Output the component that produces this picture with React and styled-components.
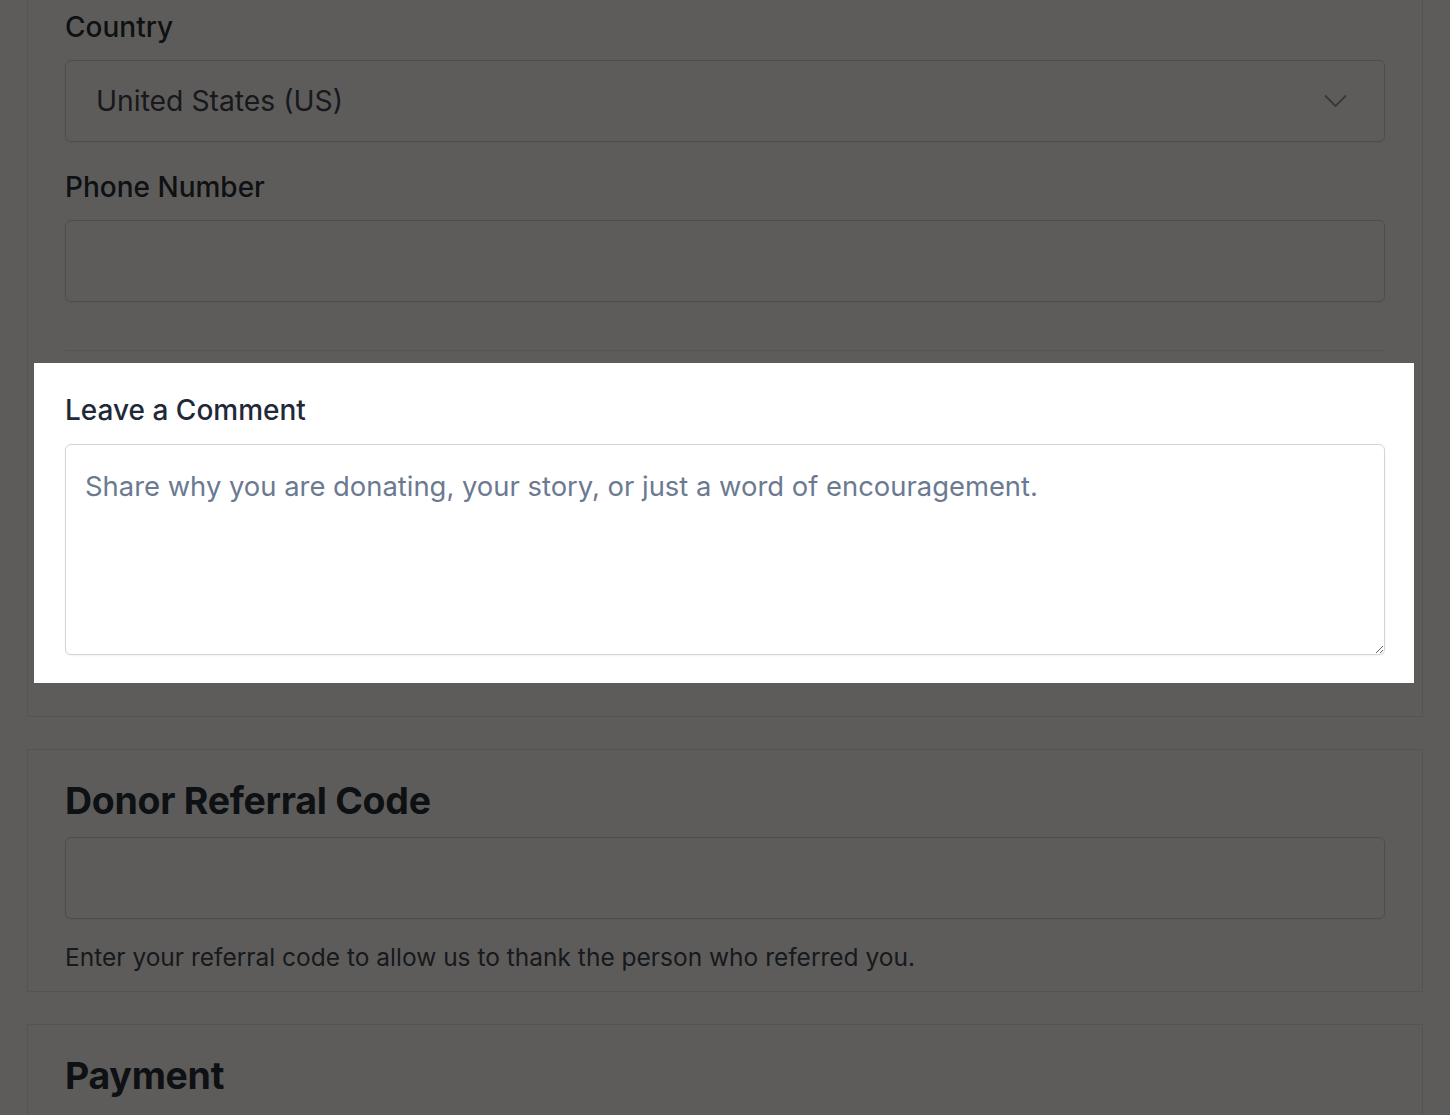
import styled, { createGlobalStyle } from "styled-components";

const GlobalStyle = createGlobalStyle`
  * { box-sizing: border-box; }
  body {
    margin: 0;
    background: #fff;
    color: #1f2937;
    font-family: Inter, "Noto Sans", sans-serif;
  }
`;

const Page = styled.main`
  display: flex;
  flex-direction: column;
  gap: 32px;
  padding: 0 27px;
  height: 1115px;
  overflow: hidden;
`;

const Card = styled.section`
  flex-shrink: 0;
  background: #fff;
  border: 1px solid #e5e7eb;
  border-top-width: ${p => (p.$cut ? 0 : 1)}px;
  padding: ${p => (p.$cut ? "8px 37px 33px" : "29px 37px 16px")};
  min-height: ${p => (p.$tall ? "200px" : "0")};
`;

const Fieldset = styled.div`
  padding-bottom: 48px;
  border-bottom: 1px solid #e5e7eb;
`;

const Field = styled.div`
  margin-bottom: 26px;
  &:last-child { margin-bottom: 0; }
`;

const Label = styled.label`
  display: block;
  font-size: 28px;
  font-weight: 500;
  line-height: 39px;
  margin-bottom: 13px;
  color: #1f2937;
`;

const Heading = styled.h2`
  margin: 0;
  font-size: 37.5px;
  font-weight: 700;
  line-height: 44px;
  letter-spacing: -0.3px;
  color: #1f2937;
`;

const Input = styled.input`
  display: block;
  width: 100%;
  height: 82px;
  margin-top: ${p => (p.$spaced ? "14px" : "0")};
  border: 1px solid #d1d5db;
  border-radius: 6px;
  box-shadow: 0 1px 2px rgba(0, 0, 0, 0.05);
  background: #fff;
  font: inherit;
  font-size: 28px;
  padding: 0 30px;
`;

const SelectWrap = styled.div`
  position: relative;
`;

const Select = styled.select`
  appearance: none;
  display: block;
  width: 100%;
  height: 82px;
  border: 1px solid #d1d5db;
  border-radius: 6px;
  box-shadow: 0 1px 2px rgba(0, 0, 0, 0.05);
  background: #fff;
  font-family: inherit;
  font-size: 28.3px;
  color: #374151;
  padding: 0 30px;
`;

const Chevron = styled.svg`
  position: absolute;
  right: 38px;
  top: 50%;
  transform: translateY(-50%);
  pointer-events: none;
`;

const Spotlight = styled.div`
  position: relative;
  z-index: 10;
  margin: 12px -29px 0 -31px;
  padding: 28px 29px 28px 31px;
  background: #fff;
  box-shadow: 0 0 0 3000px rgba(6, 4, 1, 0.65);
`;

const TextArea = styled.textarea`
  display: block;
  width: 100%;
  height: 211px;
  margin-top: 14px;
  border: 1px solid #d1d5db;
  border-radius: 6px;
  box-shadow: 0 1px 2px rgba(0, 0, 0, 0.05);
  padding: 20px 19px;
  font-family: inherit;
  font-size: 27.4px;
  line-height: 42px;
  color: #1f2937;
  &::placeholder { color: #6b7a90; }
`;

const CommentLabel = styled(Label)`
  margin-bottom: 0;
`;

const Help = styled.p`
  margin: 20px 0 0;
  font-size: 24.5px;
  line-height: 36px;
  color: #374151;
`;

function App() {
  return (
    <>
      <GlobalStyle />
      <Page>
        <Card $cut>
          <Fieldset>
            <Field>
              <Label>Country</Label>
              <SelectWrap>
                <Select defaultValue="US">
                  <option value="US">United States (US)</option>
                </Select>
                <Chevron width="23" height="13" viewBox="0 0 23 13" fill="none">
                  <path d="M1 1l10.5 10.5L22 1" stroke="#8b939f" strokeWidth="1.8" />
                </Chevron>
              </SelectWrap>
            </Field>
            <Field>
              <Label>Phone Number</Label>
              <Input type="tel" />
            </Field>
          </Fieldset>
          <Spotlight>
            <CommentLabel>Leave a Comment</CommentLabel>
            <TextArea placeholder="Share why you are donating, your story, or just a word of encouragement." />
          </Spotlight>
        </Card>
        <Card>
          <Heading>Donor Referral Code</Heading>
          <Input $spaced type="text" />
          <Help>Enter your referral code to allow us to thank the person who referred you.</Help>
        </Card>
        <Card $tall>
          <Heading>Payment</Heading>
        </Card>
      </Page>
    </>
  );
}

export default App;
